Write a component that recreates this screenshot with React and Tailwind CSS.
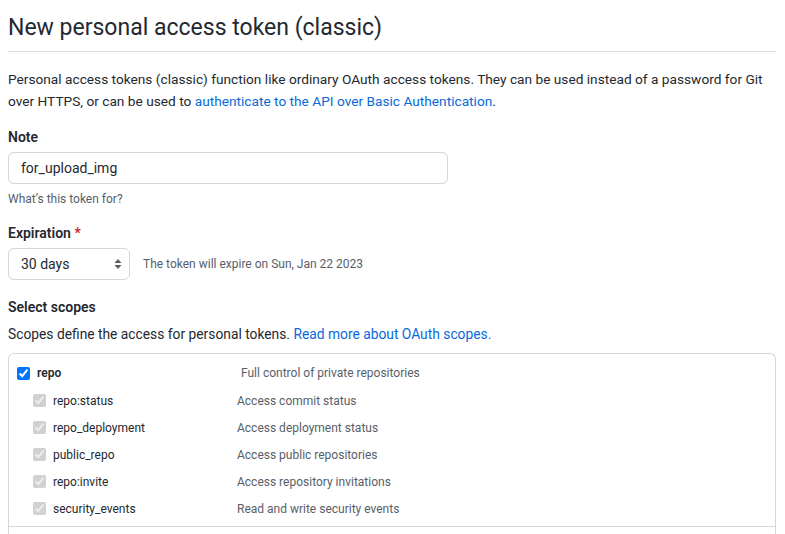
import React from "react";

const font = { fontFamily: 'Roboto, "Noto Sans", "Liberation Sans", sans-serif' };

function SubRow({ name, desc }) {
  return (
    <div className="flex items-center h-[27px]">
      <div className="w-[37px] flex justify-end">
        <input type="checkbox" defaultChecked disabled className="m-0 w-[13px] h-[13px]" />
      </div>
      <div className="w-[191px] pl-[7px] text-[#24292f]">{name}</div>
      <div className="text-[#57606a]">{desc}</div>
    </div>
  );
}

export default function App() {
  return (
    <div className="bg-white w-[785px] h-[534px] overflow-hidden text-[#24292f]" style={font}>
      <div className="px-2 w-[784px]">
        <div className="pt-[12px] pb-[8px] border-b border-[#d8dee4]">
          <h2 className="text-[23px] leading-[31px] font-normal">New personal access token (classic)</h2>
        </div>
        <p className="mt-[16px] text-[13.7px] leading-[22px] whitespace-nowrap">
          Personal access tokens (classic) function like ordinary OAuth access tokens. They can be used instead of a password for Git
          <br />
          over HTTPS, or can be used to{" "}
          <a className="text-[#0969da]">authenticate to the API over Basic Authentication</a>.
        </p>
        <div className="mt-[15px] text-[14px] leading-[21px] font-semibold">Note</div>
        <div className="mt-[4px] w-[440px] h-[32px] border border-[#d0d7de] rounded-[6px] flex items-center px-[12px] text-[14px]">
          for_upload_img
        </div>
        <div className="mt-[6px] text-[12px] leading-[18px] text-[#57606a]">What’s this token for?</div>
        <div className="mt-[15px] text-[14px] leading-[21px] font-semibold">
          Expiration <span className="text-[#cf222e]">*</span>
        </div>
        <div className="mt-[4px] flex items-center">
          <div className="w-[122px] h-[32px] border border-[#d0d7de] rounded-[6px] flex items-center justify-between pl-[12px] pr-[7px] text-[14px]">
            <span>30 days</span>
            <svg width="8" height="12" viewBox="0 0 8 12" className="text-[#57606a]">
              <path d="M4 1 L7.5 5 H0.5 Z" fill="currentColor" />
              <path d="M4 11 L7.5 7 H0.5 Z" fill="currentColor" />
            </svg>
          </div>
          <span className="ml-[13px] text-[12px] text-[#57606a]">The token will expire on Sun, Jan 22 2023</span>
        </div>
        <div className="mt-[17px] text-[14px] leading-[21px] font-semibold">Select scopes</div>
        <p className="mt-[6px] text-[13.8px] leading-[21px]">
          Scopes define the access for personal tokens.{" "}
          <a className="text-[#0969da]">Read more about OAuth scopes.</a>
        </p>
        <div className="mt-[8px] border border-[#d0d7de] rounded-t-[6px] border-b-0 text-[12px]">
          <div className="pt-[10px]">
            <div className="flex items-center h-[18px]">
              <div className="w-[21px] flex justify-end">
                <input type="checkbox" defaultChecked className="m-0 w-[13px] h-[13px]" />
              </div>
              <div className="w-[211px] pl-[7px] font-semibold">repo</div>
              <div className="text-[#57606a]">Full control of private repositories</div>
            </div>
            <div className="mt-[5px] pb-[4px]">
              <SubRow name="repo:status" desc="Access commit status" />
              <SubRow name="repo_deployment" desc="Access deployment status" />
              <SubRow name="public_repo" desc="Access public repositories" />
              <SubRow name="repo:invite" desc="Access repository invitations" />
              <SubRow name="security_events" desc="Read and write security events" />
            </div>
          </div>
          <div className="border-t border-[#d0d7de] h-[20px]"></div>
        </div>
      </div>
    </div>
  );
}
